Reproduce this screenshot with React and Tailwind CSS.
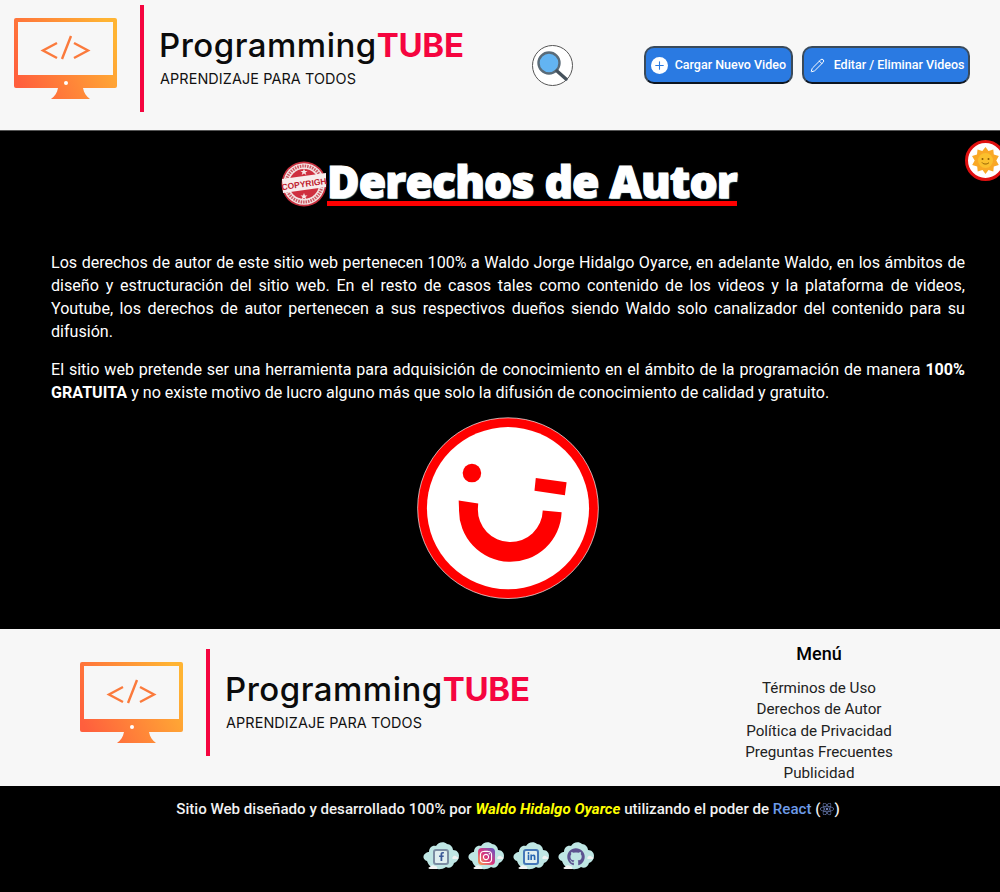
import React from "react";
import { FaFacebookF, FaInstagram, FaLinkedinIn, FaGithub, FaReact } from "react-icons/fa";
import { Plus, Pencil } from "lucide-react";

function Monitor({ id }) {
  return (
    <svg width="104" height="82" viewBox="0 0 104 82" className="shrink-0">
      <defs>
        <linearGradient id={id} x1="0" y1="0.7" x2="1" y2="0.3">
          <stop offset="0" stopColor="#ff5f3d" />
          <stop offset="1" stopColor="#ffb433" />
        </linearGradient>
      </defs>
      <path d="M2 0h99a2 2 0 0 1 2 2v66a2 2 0 0 1-2 2H69c1 5 3 8 7 11H37c4-3 6-6 7-11H2a2 2 0 0 1-2-2V2a2 2 0 0 1 2-2z" fill={`url(#${id})`} />
      <rect x="4" y="4" width="95" height="53" fill="#f7f7f7" />
      <circle cx="52" cy="65" r="2" fill="#fff" />
      <path d="M43 25L29 32.500L43 40M48 41L57 18M60 25L74 32.500L60 40" fill="none" stroke="#fb7a3c" strokeWidth="2.400" />
    </svg>
  );
}

function Logo({ id }) {
  return (
    <div className="flex items-center shrink-0">
      <Monitor id={id} />
      <div className="ml-[22px] w-[4px] h-[107px] bg-[#f5053f]" />
      <div className="ml-[15px] -mt-[5px]">
        <div className="text-[33px] leading-[42px] font-medium tracking-[0.5px] text-[#0b0b0b] font-['Inter',sans-serif] whitespace-nowrap">
          Programming<span className="text-[#f5053f] font-bold tracking-[-0.3px]">TUBE</span>
        </div>
        <div className="ml-[1px] mt-[4px] text-[14.4px] leading-[18px] text-[#111] font-['Inter',sans-serif] tracking-[0.1px] whitespace-nowrap">
          APRENDIZAJE PARA TODOS
        </div>
      </div>
    </div>
  );
}

function Cloud({ children }) {
  return (
    <div className="relative w-[38px] h-[33px] flex items-center justify-center">
      <svg viewBox="0 0 38 33" className="absolute inset-0 w-full h-full">
        <path d="M5 21c-4-1-5-6-1-8 1-1 2-1 3-1 0-4 3-7 7-6 2-4 8-5 11-2 3 0 6 3 6 6 4 0 6 3 6 6s-2 6-5 7c-1 4-5 6-8 4-4 3-10 3-13 0-3 0-5-3-6-6z" fill="#bfe6e4" />
        <path d="M8 27c1-2 4-2 5-1 2 0 3 2 2 3H8c-2 0-2-2 0-2zM31 17c1-2 3-1 4 0 2 0 2 2 0 2h-4c-1 0-1-2 0-2z" fill="#f3f3f3" />
      </svg>
      <div className="relative">{children}</div>
    </div>
  );
}

function Stamp() {
  return (
    <svg width="46" height="46" viewBox="0 0 46 46" className="shrink-0">
      <circle cx="23" cy="23" r="22.500" fill="#c9303f" />
      <circle cx="23" cy="23" r="20.800" fill="#f3e3e3" />
      <circle cx="23" cy="23" r="18" fill="none" stroke="#cf5a64" strokeWidth="3" strokeDasharray="1.500 1" />
      <circle cx="23" cy="23" r="15" fill="#cf2f3f" />
      <path d="M23 7.500l1 2.500h2.500l-2 1.600.8 2.500-2.300-1.500-2.300 1.500.8-2.500-2-1.600H22zM23 32l1 2.500h2.500l-2 1.600.8 2.500-2.300-1.500-2.300 1.500.8-2.500-2-1.600H22z" fill="#f6e6e6" />
      <path d="M1 18L45 12V26L2 32Z" fill="#f8ecec" />
      <text x="23" y="26" textAnchor="middle" fontSize="8.500" fontWeight="800" fill="#bf1d30" transform="rotate(-8 23 23)" fontFamily="'Liberation Sans', sans-serif">COPYRIGH</text>
    </svg>
  );
}

function Smile() {
  return (
    <svg width="184" height="183" viewBox="45 18 556 552" className="shrink-0">
      <circle cx="323" cy="293" r="273" fill="#f00" stroke="#fff" strokeWidth="2" />
      <circle cx="323" cy="293" r="245" fill="#fff" />
      <circle cx="214" cy="187" r="28" fill="#f00" />
      <path d="M407 202L500 215L495 254L403 240Z" fill="#f00" />
      <path d="M174 270L175 295A155 155 0 0 0 485 305L428 300A98 98 0 0 1 232 295L233 279Z" fill="#f00" />
    </svg>
  );
}

export default function App() {
  return (
    <div className="relative w-full overflow-hidden font-['Roboto',sans-serif]">
      <header className="h-[130px] bg-[#f7f7f7] flex items-start pt-[5px] pl-[14px]">
        <Logo id="g1" />
        <button className="ml-[68px] mt-[40px] w-[41px] h-[41px] rounded-full bg-white border border-[#555] flex items-center justify-center">
          <svg width="32" height="32" viewBox="0 0 32 32">
            <circle cx="13" cy="13" r="10.500" fill="#63b4f2" stroke="#5a6b78" strokeWidth="2.400" />
            <path d="M21 21L30 29" stroke="#46525c" strokeWidth="3.400" strokeLinecap="round" />
          </svg>
        </button>
        <button className="ml-[71px] mt-[41px] w-[149px] h-[38px] rounded-[10px] bg-[#2a7ae2] border-2 border-[#3a4a5a] border-b-[#0d1520] flex items-center pl-[5px] text-white text-[12.5px] font-medium whitespace-nowrap">
          <span className="w-[17px] h-[17px] rounded-full bg-white flex items-center justify-center shrink-0">
            <Plus size={13} strokeWidth={2} color="#2a7ae2" />
          </span>
          <span className="ml-[7px]">Cargar Nuevo Video</span>
        </button>
        <button className="ml-[9px] mt-[41px] w-[168px] h-[38px] rounded-[10px] bg-[#2a7ae2] border-2 border-[#3a4a5a] border-b-[#0d1520] flex items-center pl-[6px] text-white text-[12.5px] font-medium whitespace-nowrap">
          <Pencil size={15} strokeWidth={1.600} className="shrink-0" />
          <span className="ml-[9px]">Editar / Eliminar Videos</span>
        </button>
      </header>

      <main className="h-[499px] bg-black pl-[51px] pr-[35px] pt-[30px] text-white relative border-t border-[#555]">
        <div className="absolute right-[-6px] top-[9px] w-[41px] h-[41px] rounded-full bg-white border-[3px] border-[#e01010] flex items-center justify-center">
          <svg width="27" height="27" viewBox="0 0 27 27">
            <path d="M13.500 0l3 4 4.800-1.500.5 5 5 1.500-2.500 4.500 2.500 4.500-5 1.500-.5 5-4.800-1.500-3 4-3-4-4.800 1.500-.5-5-5-1.500 2.500-4.500L0 9l5-1.500.5-5L10.300 4z" fill="#f9a825" />
            <circle cx="13.500" cy="13.500" r="7.500" fill="#fbc02d" />
            <path d="M10 15.500c1.500 2 5.500 2 7 0" stroke="#8a5a00" strokeWidth="1" fill="none" />
            <circle cx="10.500" cy="12" r="1" fill="#8a5a00" />
            <circle cx="16.500" cy="12" r="1" fill="#8a5a00" />
          </svg>
        </div>

        <div className="flex justify-center items-center ml-[2px]">
          <Stamp />
          <h1 className="border-b-[5px] border-[#f00] leading-[39px] text-[44px] font-extrabold text-white whitespace-nowrap font-['Open_Sans',sans-serif] tracking-[-0.6px] [-webkit-text-stroke:1.2px_#fff] [text-shadow:1px_1px_1px_#9cc]">
            Derechos de Autor
          </h1>
        </div>

        <p className="mt-[44px] text-[16.1px] leading-[23px] text-justify">
          Los derechos de autor de este sitio web pertenecen 100% a Waldo Jorge Hidalgo Oyarce, en adelante Waldo, en los ámbitos de diseño y estructuración del sitio web. En el resto de casos tales como contenido de los videos y la plataforma de videos, Youtube, los derechos de autor pertenecen a sus respectivos dueños siendo Waldo solo canalizador del contenido para su difusión.
        </p>
        <p className="mt-[15px] text-[16.1px] leading-[23px] text-justify">
          El sitio web pretende ser una herramienta para adquisición de conocimiento en el ámbito de la programación de manera <b>100% GRATUITA</b> y no existe motivo de lucro alguno más que solo la difusión de conocimiento de calidad y gratuito.
        </p>
        <div className="flex justify-center mt-[13px]">
          <Smile />
        </div>
      </main>

      <section className="h-[157px] bg-[#f7f7f7] flex pl-[66px]">
        <div className="pt-[20px] pl-[14px]">
          <Logo id="g2" />
        </div>
        <div className="ml-auto w-[362px] pt-[13px] flex flex-col items-center text-[#222]">
          <div className="text-[18px] leading-[24px] font-medium text-black">Menú</div>
          <div className="mt-[12px] text-[15.2px] leading-[21.3px] text-center">
            <div>Términos de Uso</div>
            <div>Derechos de Autor</div>
            <div>Política de Privacidad</div>
            <div>Preguntas Frecuentes</div>
            <div>Publicidad</div>
          </div>
        </div>
      </section>

      <footer className="h-[106px] bg-black flex flex-col items-center pt-[13px]">
        <div className="text-[15.1px] leading-[20px] font-medium text-[#f2f2f2] whitespace-nowrap flex items-center ml-[16px]">
          <span>Sitio Web diseñado y desarrollado 100% por&nbsp;</span>
          <span className="text-[#ffff00] italic font-bold">Waldo Hidalgo Oyarce</span>
          <span>&nbsp;utilizando el poder de&nbsp;</span>
          <span className="text-[#6d9be8]">React</span>
          <span>&nbsp;(</span>
          <FaReact size={14} color="#6d7fb8" />
          <span>)</span>
        </div>
        <div className="mt-[21px] ml-[17px] flex gap-[7px]">
          <Cloud>
            <span className="w-[16px] h-[16px] flex items-center justify-center bg-[#dfeef0] border-2 border-[#7b8da3] rounded-[3px]">
              <FaFacebookF size={9} color="#3b5998" />
            </span>
          </Cloud>
          <Cloud>
            <span className="w-[17px] h-[17px] flex items-center justify-center rounded-[4px] bg-gradient-to-tr from-[#f9a03c] via-[#d62f7f] to-[#5b4fc4]">
              <FaInstagram size={14} color="#fff" />
            </span>
          </Cloud>
          <Cloud>
            <span className="w-[16px] h-[16px] flex items-center justify-center bg-[#dfeef0] border-2 border-[#4577b8] rounded-[3px]">
              <FaLinkedinIn size={9} color="#2867b2" />
            </span>
          </Cloud>
          <Cloud>
            <span className="w-[18px] h-[18px] flex items-center justify-center">
              <FaGithub size={18} color="#5d5390" />
            </span>
          </Cloud>
        </div>
      </footer>
    </div>
  );
}
